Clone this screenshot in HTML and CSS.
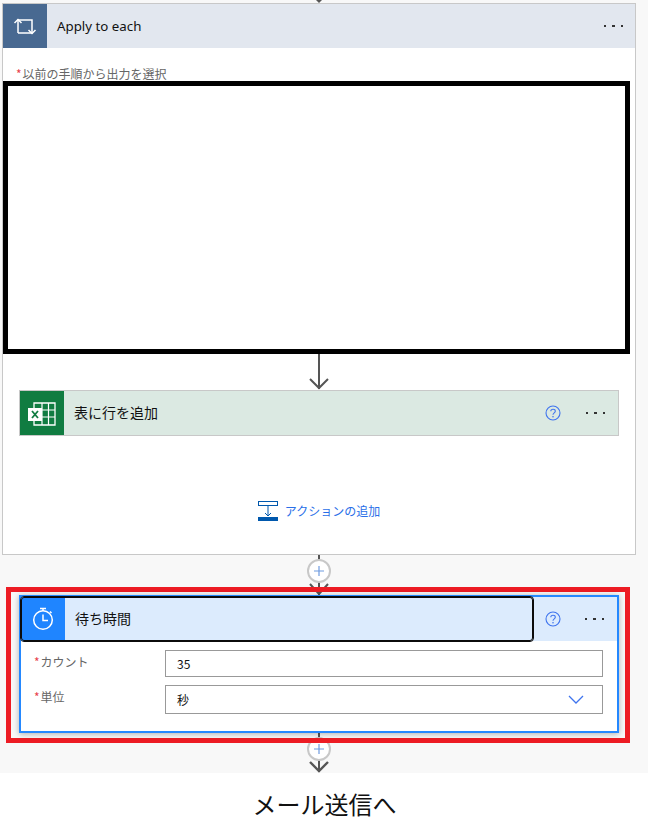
FILE: index.html
```html
<!DOCTYPE html>
<html lang="ja">
<head>
<meta charset="utf-8">
<title>Flow</title>
<link rel="stylesheet" href="styles.css">
</head>
<body>
<main class="canvas">
  <svg class="tip" width="12" height="3" viewBox="0 0 12 3"><path d="M3 0 6 3 9 0Z" fill="#555"/></svg>

  <section class="apply">
    <header class="head head-apply">
      <span class="icon icon-apply">
        <svg width="44" height="44" viewBox="0 0 44 44" fill="none" stroke="#fff" stroke-width="1.5"><path d="M15 29V16H29V29H15"/><path d="M11.5 19 15 15.5 18.5 19"/><path d="M25.5 26 29 29.5 32.5 26"/></svg>
      </span>
      <span class="title title-apply">Apply to each</span>
      <span class="dots dots-apply"><i></i><i></i><i></i></span>
    </header>
    <div class="select-label"><span class="req">*</span>以前の手順から出力を選択</div>
    <div class="redacted"></div>
    <svg class="down" width="22" height="36" viewBox="0 0 22 36" fill="none" stroke="#555" stroke-width="2"><path d="M11 0V35"/><path d="M2 25 11 34 20 25"/></svg>
    <div class="action action-excel">
      <span class="icon icon-excel">
        <svg width="44" height="44" viewBox="0 0 44 44"><path d="M14 12H35V34H14Z" fill="none" stroke="#fff" stroke-width="1.3"/><path d="M22 12V34M28.500 12V34M22 19H35M22 26H35" stroke="#fff" stroke-width="1.2"/><rect x="8" y="17" width="14" height="13" fill="#fff"/><path d="M12 20 18 27M18 20 12 27" stroke="#107c41" stroke-width="1.8"/></svg>
      </span>
      <span class="title title-excel">表に行を追加</span>
      <svg class="help help-excel" width="16" height="16" viewBox="0 0 16 16"><circle cx="8" cy="8" r="7" fill="none" stroke="#3f74ee" stroke-width="1.1"/><path d="M5.800 6.300C5.800 3.600 10.300 3.700 10.300 6.200 10.300 7.900 8 7.800 8 9.800" fill="none" stroke="#3f74ee" stroke-width="1.1"/><circle cx="8" cy="11.800" r=".8" fill="#3f74ee"/></svg>
      <span class="dots dots-excel"><i></i><i></i><i></i></span>
    </div>
    <div class="add-action">
      <svg width="20" height="20" viewBox="0 0 20 20" fill="none"><rect x=".5" y=".5" width="19" height="4" stroke="#0058ad"/><path d="M10 5V15M7 12 10 15 13 12" stroke="#0058ad"/><rect y="16" width="20" height="4" fill="#0058ad"/></svg>
      <span class="add-text">アクションの追加</span>
    </div>
  </section>

  <svg class="link link-top" width="24" height="42" viewBox="0 0 24 42" fill="none"><path d="M12 1V41" stroke="#555" stroke-width="2"/><path d="M3 30 12 40 21 30" stroke="#555" stroke-width="2"/><circle cx="12" cy="17" r="11" fill="#fff" stroke="#c8c8c8" stroke-width="2"/><path d="M7 17H17M12 12V22" stroke="#6f9be0" stroke-width="1.2"/></svg>

  <div class="frame">
    <section class="wait">
      <header class="head head-wait">
        <div class="focus">
          <span class="icon icon-wait">
            <svg width="44" height="44" viewBox="0 0 44 44" fill="none" stroke="#fff" stroke-width="1.5"><circle cx="22" cy="23" r="9.300"/><path d="M19 11.500H25M22 11.500V14M29 14.500 30.500 16"/><path d="M22 17.500V23.500H27"/></svg>
          </span>
          <span class="title title-wait">待ち時間</span>
        </div>
        <svg class="help help-wait" width="16" height="16" viewBox="0 0 16 16"><circle cx="8" cy="8" r="7" fill="none" stroke="#3f74ee" stroke-width="1.1"/><path d="M5.800 6.300C5.800 3.600 10.300 3.700 10.300 6.200 10.300 7.900 8 7.800 8 9.800" fill="none" stroke="#3f74ee" stroke-width="1.1"/><circle cx="8" cy="11.800" r=".8" fill="#3f74ee"/></svg>
        <span class="dots dots-wait"><i></i><i></i><i></i></span>
      </header>
      <div class="form">
        <div class="label label-count"><span class="req">*</span>カウント</div>
        <div class="input input-count">35</div>
        <div class="label label-unit"><span class="req">*</span>単位</div>
        <div class="input input-unit">秒
          <svg width="16" height="9" viewBox="0 0 16 9" fill="none"><path d="M1 1 8 8 15 1" stroke="#3f74ee" stroke-width="1.3"/></svg>
        </div>
      </div>
    </section>
  </div>

  <svg class="link link-bottom" width="24" height="40" viewBox="0 0 24 40" fill="none"><path d="M12 0V39" stroke="#555" stroke-width="2"/><path d="M3 29 12 38 21 29" stroke="#555" stroke-width="2.400"/><circle cx="12" cy="16" r="11" fill="#fff" stroke="#c8c8c8" stroke-width="2"/><path d="M7 16H17M12 11V21" stroke="#6f9be0" stroke-width="1.2"/></svg>
</main>
<p class="caption">メール送信へ</p>
</body>
</html>
```
FILE: styles.css
```css
* { box-sizing: border-box; }
html, body { margin: 0; padding: 0; background: #fff; }
body {
  width: 648px;
  height: 838px;
  overflow: hidden;
  color: #111;
  font-family: "Noto Sans", "Noto Sans CJK JP", sans-serif;
}
svg { display: block; flex: none; }

.canvas {
  display: flex;
  flex-direction: column;
  height: 773px;
  background: #f8f8f8;
}
.tip { margin-left: 313px; height: 3px; }

.apply {
  display: flex;
  flex-direction: column;
  margin-left: 2px;
  width: 634px;
  height: 552px;
  border: 1px solid #c8c8c8;
  background: #fff;
}
.head { display: flex; align-items: center; height: 44px; flex: none; }
.head-apply { background: #e2e7ef; }
.icon { display: block; width: 44px; height: 44px; flex: none; }
.icon-apply { background: #486991; }
.icon-excel { background: #107c41; }
.icon-wait { background: #1f85ff; }
.title { font-size: 14px; line-height: 20px; color: #111; }
.title-apply { margin-left: 10px; font-size: 13.300px; flex: 1; }
.title-excel { margin-left: 10px; flex: 1; padding-bottom: 2px; font-family: "Noto Sans CJK JP", sans-serif; }
.title-wait { margin-left: 10px; padding-bottom: 2px; font-family: "Noto Sans CJK JP", sans-serif; }

.dots { display: flex; gap: 6px; flex: none; }
.dots i { display: block; width: 2.400px; height: 2.400px; background: #333; }
.dots-apply { margin-right: 12px; }
.dots-excel { margin-right: 13px; }

.select-label {
  margin: 18px 0 -1px 13px;
  font: 12px/16px "Noto Sans CJK JP", sans-serif;
  color: #666;
}
.req { color: #e8414c; margin-right: 1px; }
.redacted {
  width: 627px;
  height: 273px;
  border: 5px solid #000;
  background: #fff;
  flex: none;
}
.down { align-self: center; }
.action {
  display: flex;
  align-items: center;
  margin: 0 16px;
  height: 46px;
  flex: none;
  border: 1px solid #c8c8c8;
  background: #dbe9e2;
}
.help { flex: none; }
.help-excel { margin-right: 25px; }
.help-wait { margin: 0 24px 0 11px; }
.add-action {
  display: flex;
  align-items: center;
  justify-content: center;
  gap: 7px;
  margin-top: 65px;
}
.add-text { font: 12px/20px "Noto Sans CJK JP", sans-serif; color: #2a6fe8; }

.link { margin-left: 307px; flex: none; }
.link-top { margin: -1px 0 -9px 307px; }
.link-bottom { margin-top: -10px; }

.frame {
  position: relative;
  margin-left: 6px;
  width: 624px;
  height: 156px;
  padding: 3px 0 0 8px;
  border: 5px solid #ed1c24;
  flex: none;
}
.wait {
  display: flex;
  flex-direction: column;
  width: 600px;
  height: 138px;
  border: 2px solid #2488ff;
  background: #fff;
  box-shadow: 0 1px 6px rgba(0, 0, 0, .3);
}
.head-wait { background: #dcebfd; }
.focus {
  display: flex;
  align-items: center;
  width: 514px;
  height: 46px;
  margin: -1px 0 -1px -1px;
  flex: none;
  border: 1px solid #0b0b0b;
  outline: 1px solid #0b0b0b;
  outline-offset: -2px;
  border-radius: 4px;
  background: #dcebfd;
  overflow: hidden;
}
.form {
  display: grid;
  grid-template-columns: 131px 1fr;
  row-gap: 8px;
  padding: 9px 14px 0 13px;
}
.label {
  font: 12px/16px "Noto Sans CJK JP", sans-serif;
  color: #666;
}
.label-count { margin-top: 4px; }
.label-unit { margin-top: 4px; }
.input {
  display: flex;
  align-items: center;
  justify-content: space-between;
  padding: 0 18px 0 11px;
  border: 1px solid #999;
  background: #fff;
  font: 12px/16px "Noto Sans CJK JP", sans-serif;
  color: #111;
}
.input-count { height: 27px; }
.input-unit { height: 29px; }

.caption {
  margin: 14px 0 0;
  padding-left: 1px;
  text-align: center;
  font: 24px/34px "Noto Sans CJK JP", sans-serif;
  color: #111;
}
```
